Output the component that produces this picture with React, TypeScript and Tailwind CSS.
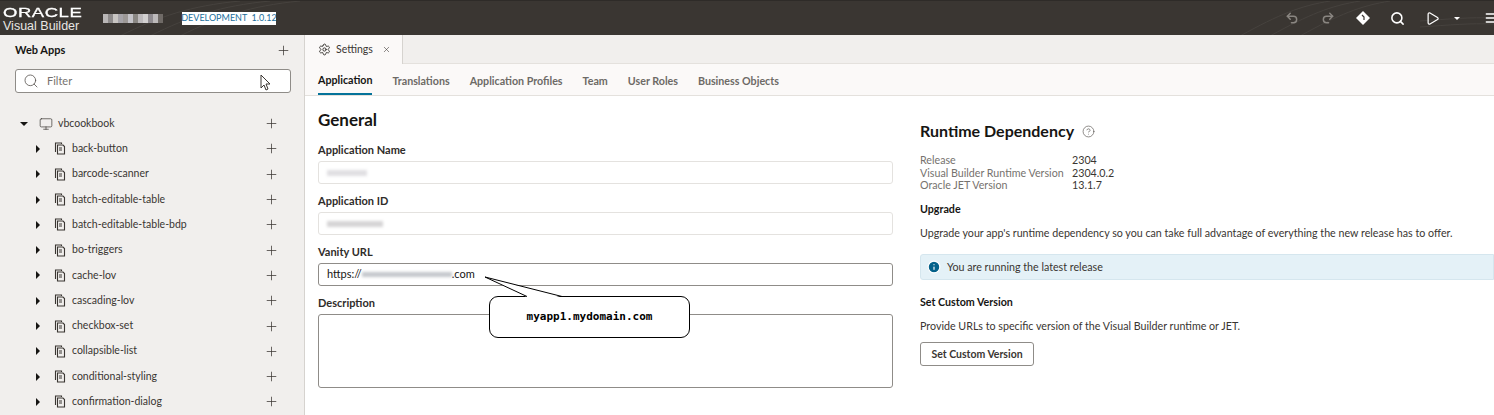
import { Plus, Search, X, Settings, Monitor, Undo2, Redo2, Play, Menu, Info, CircleHelp } from "lucide-react";

const apps = [
  "back-button",
  "barcode-scanner",
  "batch-editable-table",
  "batch-editable-table-bdp",
  "bo-triggers",
  "cache-lov",
  "cascading-lov",
  "checkbox-set",
  "collapsible-list",
  "conditional-styling",
  "confirmation-dialog",
];

const tabs = ["Translations", "Application Profiles", "Team", "User Roles", "Business Objects"];

const PagesIcon = () => (
  <svg width="12" height="13" viewBox="0 0 12 13" fill="none" stroke="#3a3632" strokeWidth="1.1">
    <path d="M1.5 10V1h6l0 1" />
    <path d="M3.5 3h5.5l1.5 1.500V12H3.500z" fill="#f1efed" />
    <path d="M5 6h3M5 8h3" />
  </svg>
);

const Caret = ({ down }: { down?: boolean }) =>
  down ? (
    <span className="w-0 h-0 border-x-[4px] border-x-transparent border-t-[4px] border-t-[#161513]" />
  ) : (
    <span className="w-0 h-0 border-y-[4px] border-y-transparent border-l-[4px] border-l-[#161513]" />
  );

const Blur = ({ className }: { className: string }) => <div className={`blur-[1.5px] ${className}`} />;

// pixelated app name in the header
const mosaic = ["#b9b6b6", "#8d8a8a", "#c8c5c2", "#a5a3a8", "#9c9896", "#c4c3c8", "#8a8783", "#bdbabc", "#d2d0d0", "#8f8b90", "#bcb9ba", "#6f6a66"];

const Field = ({
  label,
  children,
  h = "h-[23px]",
  border = "border-[#8f8c88]",
}: {
  label: string;
  children?: React.ReactNode;
  h?: string;
  border?: string;
}) => (
  <div className="flex flex-col">
    <div className="h-[28px] pt-[6px] flex items-center text-[11px] font-bold text-[#2f2c29]">{label}</div>
    <div className={`${h} flex items-center px-2 bg-white rounded-[3px] border ${border} text-[11px] text-[#161513]`}>
      {children}
    </div>
  </div>
);

const App = () => {
  return (
    <div className="relative w-[1494px] h-[415px] overflow-hidden bg-white font-['Lato',sans-serif]">
      {/* Header */}
      <header className="relative h-[35px] bg-[#3a3632] border-t border-[#2e2b28] flex items-center text-white overflow-hidden">
        <svg width="1494" height="35" viewBox="0 0 1494 35" fill="none" stroke="#46423e" strokeWidth="1" className="absolute left-0 top-0">
          <path d="M120 35c40-20 70-30 120-35M150 35c40-20 70-30 120-35M180 35c40-20 70-30 120-35" />
          <path d="M1240 35c40-22 60-30 90-35M1270 35c40-22 60-30 90-35M1300 35c40-22 60-30 90-35M1420 20c30-2 50-4 74-3M1420 26c30-2 50-4 74-3" />
        </svg>
        <div className="relative w-[103px] pl-[3px] flex flex-col font-['Liberation_Sans',sans-serif]">
          <span className="inline-block origin-left scale-x-[1.420] text-[13px] tracking-[0.4px] leading-[13px] mt-[3px] [-webkit-text-stroke:0.3px_white]">ORACLE</span>
          <span className="text-[12.500px] leading-[15px] text-[#e8e6e3]">Visual Builder</span>
        </div>
        <div className="relative w-[60px] h-[9px] mr-[19px] flex">
          {mosaic.map((c, i) => (
            <span key={i} className="flex-1" style={{ backgroundColor: c }} />
          ))}
        </div>
        <div className="relative h-[13px] w-[94px] bg-white text-[#1c6f9c] text-[9px] flex items-center justify-center whitespace-nowrap">
          DEVELOPMENT&nbsp;&nbsp;1.0.12
        </div>
        <div className="flex-1" />
        <div className="relative flex items-center -mr-[4px]">
          <Undo2 size={14} strokeWidth={2.500} className="text-[#8a8681]" />
          <Redo2 size={14} strokeWidth={2.500} className="text-[#8a8681] ml-[22px]" />
          <svg width="14" height="14" viewBox="0 0 14 14" className="ml-[21px]">
            <path d="M7 0l7 7-7 7-7-7z" fill="#fff" />
            <path d="M6 4l2 2v3" stroke="#3a3632" strokeWidth="1.200" fill="none" />
          </svg>
          <Search size={15} strokeWidth={2.500} className="ml-[20px]" />
          <Play size={15} strokeWidth={2} className="ml-[20px]" />
          <span className="ml-[14px] w-0 h-0 border-x-[3px] border-x-transparent border-t-[3px] border-t-white" />
          <Menu size={14} strokeWidth={2.500} className="ml-[24px]" />
        </div>
      </header>

      <div className="flex h-[380px]">
        {/* Sidebar */}
        <aside className="w-[305px] shrink-0 bg-[#f1efed] border-r border-[#d6d3cf]">
          <div className="h-[30px] pl-[15px] pr-[13px] flex items-center justify-between">
            <span className="text-[11px] font-bold text-[#161513]">Web Apps</span>
            <Plus size={15} strokeWidth={1.200} className="text-[#3a3632]" />
          </div>
          <div className="relative ml-[15px] mr-[13px] mt-[4px] h-[24px] flex items-center gap-[8px] px-[7px] bg-white border border-[#8f8c88] rounded-[3px]">
            <Search size={16} strokeWidth={1.200} className="text-[#55514d]" />
            <span className="text-[11px] text-[#76726e]">Filter</span>
            <svg width="14" height="18" viewBox="0 0 14 18" className="absolute left-[244px] top-[4px]">
              <path d="M1 1v13l3-3 2 5 2-1-2-5h4z" fill="#fff" stroke="#3a3632" strokeWidth="1" />
            </svg>
          </div>
          <div className="mt-[18px]">
            <div className="h-[25.300px] pl-[20px] pr-[25px] flex items-center">
              <Caret down />
              <Monitor size={14} strokeWidth={1.200} className="ml-[11px] text-[#3a3632]" />
              <span className="ml-[5px] text-[10.500px] text-[#3a3632]">vbcookbook</span>
              <Plus size={15} strokeWidth={1.200} className="ml-auto text-[#3a3632]" />
            </div>
            {apps.map((app) => (
              <div key={app} className="h-[25.300px] pl-[36px] pr-[25px] flex items-center">
                <Caret />
                <span className="ml-[14px] flex">
                  <PagesIcon />
                </span>
                <span className="ml-[6px] text-[10.500px] text-[#3a3632]">{app}</span>
                <Plus size={15} strokeWidth={1.200} className="ml-auto text-[#3a3632]" />
              </div>
            ))}
          </div>
        </aside>

        {/* Main */}
        <main className="flex-1 min-w-0">
          <div className="h-[29px] flex bg-[#f1efed] border-b border-[#e4e1dd]">
            <div className="w-[98px] -mb-[1px] bg-[#fbf9f8] border-r border-[#d6d3cf] flex items-center pl-[13px] text-[#3a3632]">
              <Settings size={13} strokeWidth={1.800} />
              <span className="ml-[5px] text-[10.500px]">Settings</span>
              <X size={9} strokeWidth={1.500} className="ml-[9px]" />
            </div>
          </div>
          <nav className="h-[32px] bg-[#fbf9f8] border-b border-[#e4e1dd] flex items-stretch gap-[20px] pl-[13px] text-[10.700px] text-[#6d6a66] font-bold">
            <span className="flex items-center h-[31px] text-[#161513] border-b-2 border-[#04739a] pt-[4px]">Application</span>
            {tabs.map((t) => (
              <span key={t} className="flex items-center h-[31px] pt-[3px]">
                {t}
              </span>
            ))}
          </nav>

          <div className="flex">
            {/* General */}
            <section className="w-[575px] ml-[13px] shrink-0">
              <h2 className="h-[40px] pt-[12px] text-[17px] leading-[24px] font-bold text-[#161513]">General</h2>
              <div className="flex flex-col gap-0 -mt-[3px]">
                <Field label="Application Name" border="border-[#e4e2df]">
                  <Blur className="w-[40px] h-[6px] bg-[#e0dfe2]" />
                </Field>
                <Field label="Application ID" border="border-[#e4e2df]">
                  <Blur className="w-[56px] h-[6px] bg-[#d6d5d6]" />
                </Field>
                <Field label="Vanity URL">
                  <span>https://</span>
                  <Blur className="w-[90px] h-[5px] bg-[#c4c7cc]" />
                  <span>.com</span>
                </Field>
                <Field label="Description" h="h-[74px]" />
              </div>
            </section>

            {/* Runtime dependency */}
            <section className="ml-[27px] flex-1 min-w-0 pt-[23px]">
              <div className="flex items-center h-[24px]">
                <h2 className="text-[16px] font-bold text-[#161513]">Runtime Dependency</h2>
                <CircleHelp size={13} strokeWidth={1.200} className="ml-[8px] text-[#55514d]" />
              </div>
              <div className="mt-[11px] grid grid-cols-[152px_1fr] text-[10.700px] leading-[12.700px] whitespace-nowrap">
                <span className="text-[#76726e]">Release</span>
                <span className="text-[#3a3632]">2304</span>
                <span className="text-[#76726e]">Visual Builder Runtime Version</span>
                <span className="text-[#3a3632]">2304.0.2</span>
                <span className="text-[#76726e]">Oracle JET Version</span>
                <span className="text-[#3a3632]">13.1.7</span>
              </div>
              <div className="mt-[9px] h-[16px] flex items-center text-[10.700px] font-bold text-[#161513]">Upgrade</div>
              <p className="mt-[8px] h-[16px] flex items-center text-[10.700px] text-[#3a3632] whitespace-nowrap">
                Upgrade your app's runtime dependency so you can take full advantage of everything the new release has to offer.
              </p>
              <div className="mt-[13px] h-[26px] flex items-center pl-[6px] bg-[#e4f1f7] border border-[#d5e6ee] rounded-l-[3px] text-[10.700px] text-[#3a3632]">
                <Info size={14} fill="#04618a" stroke="#ffffff" strokeWidth={2} />
                <span className="ml-[6px]">You are running the latest release</span>
              </div>
              <div className="mt-[14px] h-[16px] flex items-center text-[10.700px] font-bold text-[#161513]">Set Custom Version</div>
              <p className="mt-[8px] h-[16px] flex items-center text-[10.700px] text-[#3a3632]">
                Provide URLs to specific version of the Visual Builder runtime or JET.
              </p>
              <button className="mt-[8px] h-[24px] w-[114px] pt-[1px] bg-white border border-[#8f8c88] rounded-[3px] text-[10.500px] font-bold text-[#3a3632]">
                Set Custom Version
              </button>
            </section>
          </div>
        </main>
      </div>

      {/* Callout annotation over the form */}
      <div className="absolute left-[489px] top-[296px] w-[201px] h-[42px] pt-[1px] bg-white border-[1.500px] border-black rounded-[9px] flex items-center justify-center font-['DejaVu_Sans_Mono',monospace] font-bold text-[11px] text-black">
        myapp1.mydomain.com
      </div>
      <svg width="90" height="24" viewBox="0 0 90 24" className="absolute left-[480px] top-[274px]">
        <path d="M48 23.500L5 3l77 20.500" fill="#fff" stroke="none" />
        <path d="M47 22.500L5 3l77 19.500" fill="none" stroke="#000" strokeWidth="1" />
      </svg>
    </div>
  );
};

export default App;
